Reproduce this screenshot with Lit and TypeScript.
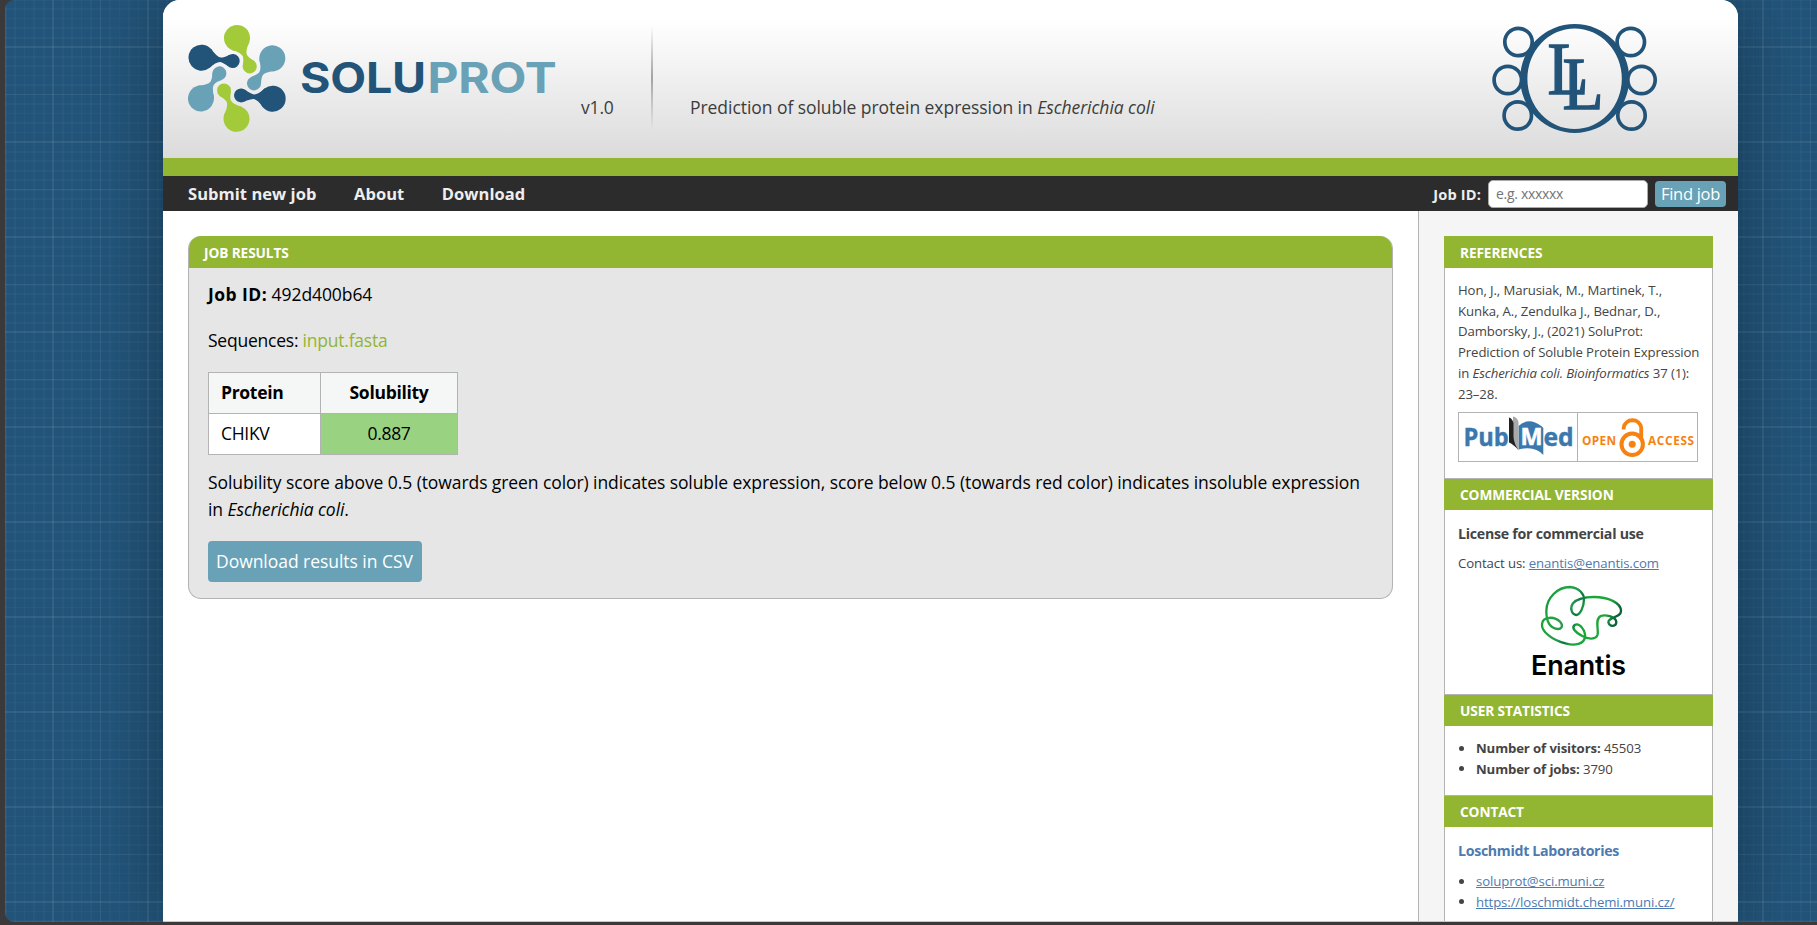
import { LitElement, html, svg, css } from "lit";
import { customElement } from "lit/decorators.js";

const GREEN = "#a2ca39";
const TEAL = "#69a1b6";
const NAVY = "#22547a";

/* colour, large ball x/y, small ball x/y */
const MOLECULES: [string, number, number, number, number][] = [
  [GREEN, 49, 17, 61.7, 45.4],
  [TEAL, 84.3, 37.3, 66, 62.4],
  [NAVY, 84.7, 77.7, 53, 74.4],
  [GREEN, 48.5, 97.8, 36, 69.4],
  [TEAL, 13, 77.4, 31.4, 52.3],
  [NAVY, 13.5, 36.7, 44.7, 40],
];

@customElement("soluprot-logo")
export class SoluprotLogo extends LitElement {
  static styles = css`
    :host { display: block; }
    svg { display: block; }
    .word { font-family: Inter, sans-serif; font-weight: 700; font-size: 42px; }
  `;
  render() {
    return html`<svg width="372" height="112" viewBox="0 0 372 112">
      ${MOLECULES.map(([c, x, y, sx, sy]) => {
        const d = Math.hypot(sx - x, sy - y);
        const a = (Math.atan2(sy - y, sx - x) * 180) / Math.PI;
        return svg`<g fill=${c} transform="translate(${x} ${y}) rotate(${a})">
          <circle r="13"/><circle cx=${d} r="7"/>
          <path d="M8.5 9.8 Q15 2.4 19 2.2 Q22 2.4 ${d - 3.6} 6 L${d - 3.6} -6 Q22 -2.4 19 -2.2 Q15 -2.4 8.5 -9.8Z"/>
        </g>`;
      })}
      <text class="word" x="112" y="72.400" fill=${NAVY} textLength="126" lengthAdjust="spacingAndGlyphs">SOLU</text>
      <text class="word" x="239.500" y="72.400" fill=${TEAL} textLength="129" lengthAdjust="spacingAndGlyphs">PROT</text>
    </svg>`;
  }
}

@customElement("loschmidt-logo")
export class LoschmidtLogo extends LitElement {
  static styles = css`
    :host { display: block; }
    svg { display: block; }
    .l { font-family: "Liberation Serif", serif; font-size: 75px; }
  `;
  render() {
    const rings = [[26.5, 18], [15.8, 56], [25.8, 91.5], [138.8, 18], [149.5, 56], [139.5, 91.5]];
    return html`<svg width="166" height="112" viewBox="0 0 166 112" fill=${NAVY}>
      <path fill-rule="evenodd" d="M28.2 54.5a54.5 54.4 0 1 0 109 0a54.5 54.4 0 1 0 -109 0ZM35.4 54.7a47.2 50.3 0 1 0 94.4 0a47.2 50.3 0 1 0 -94.4 0Z"/>
      ${rings.map(([x, y]) => svg`<circle cx=${x} cy=${y} r="13.7" fill="none" stroke=${NAVY} stroke-width="3.7"/>`)}
      <text class="l" x="55.5" y="69.500" textLength="41" lengthAdjust="spacingAndGlyphs" stroke=${NAVY} stroke-width="1.400">L</text>
      <text class="l" x="70.5" y="85" textLength="41" lengthAdjust="spacingAndGlyphs" stroke=${NAVY} stroke-width="1.400">L</text>
    </svg>`;
  }
}

@customElement("pubmed-logo")
export class PubmedLogo extends LitElement {
  static styles = css`
    :host { display: block; }
    svg { display: block; }
    text { font-family: "Open Sans", sans-serif; font-weight: 700; }
  `;
  render() {
    return html`<svg width="118" height="48" viewBox="0 0 118 48">
      <text x="4.5" y="32.500" font-size="25" fill="#3b78ae" stroke="#3b78ae" stroke-width=".4" textLength="45" lengthAdjust="spacingAndGlyphs">Pub</text>
      <text x="84.500" y="32.500" font-size="25" fill="#3b78ae" stroke="#3b78ae" stroke-width=".4" textLength="30" lengthAdjust="spacingAndGlyphs">ed</text>
      <path d="M59.5 13Q67 6 76 9.500Q82 12 84.300 15V42Q78 35 68 35.300Q63 35.500 59.500 36.500Z" fill="#3b78ae"/>
      <path d="M54 3.500Q58 4 59.500 9V37L54 30Z" fill="#a9a9a9"/>
      <path d="M50 4.500Q53 5 54.500 10V24Q55 31 59.500 37Q54 31 50 29.500Z" fill="#222"/>
      <text x="61.500" y="31.500" font-size="23" fill="#fff" stroke="#fff" stroke-width=".5" textLength="22" lengthAdjust="spacingAndGlyphs">M</text>
    </svg>`;
  }
}

@customElement("open-access-logo")
export class OpenAccessLogo extends LitElement {
  static styles = css`
    :host { display: block; }
    svg { display: block; }
    text { font-family: "Open Sans", sans-serif; font-weight: 700; font-size: 11.8px; fill: #f68212; }
  `;
  render() {
    return html`<svg width="120" height="48" viewBox="0 0 120 48">
      <text x="4" y="31.500" textLength="34" lengthAdjust="spacing">OPEN</text>
      <text x="70" y="31.500" textLength="46" lengthAdjust="spacing">ACCESS</text>
      <g fill="none" stroke="#f68212" stroke-width="3.800">
        <circle cx="54.200" cy="31.300" r="10.700" stroke-width="4"/>
        <path d="M45.700 16.500V14.500A8.900 8.900 0 0 1 63.200 14.500V26"/>
      </g>
      <circle cx="54.200" cy="31.300" r="3.500" fill="#f68212"/>
    </svg>`;
  }
}

@customElement("enantis-logo")
export class EnantisLogo extends LitElement {
  static styles = css`
    :host { display: block; }
    svg { display: block; margin: 0 auto; overflow: visible; }
    text { font-family: Inter, sans-serif; font-weight: 600; font-size: 27px; }
  `;
  render() {
    return html`<svg width="96" height="98" viewBox="0 0 96 98">
      <defs><linearGradient id="g" x1="0" y1="0" x2="1" y2="0.300">
        <stop offset="0" stop-color="#0b7a3e"/><stop offset=".2" stop-color="#1da53c"/><stop offset=".42" stop-color="#2a9c50"/>
        <stop offset=".52" stop-color="#0d7440"/><stop offset=".6" stop-color="#1ba63a"/><stop offset=".88" stop-color="#1ba63a"/><stop offset="1" stop-color="#09643c"/>
      </linearGradient></defs>
      <path transform="scale(.33333) translate(-394 -347)" fill="none" stroke="url(#g)" stroke-width="7"
        d="M664 425C664 447 625 441 626 459C630 475 650 472 650 458C648 440 615 435 603 440C585 450 597 480 594 495C590 512 565 510 548 500C525 488 515 475 525 467C540 458 558 485 556 503C553 525 525 530 500 523C455 512 425 485 427 465C428 440 465 440 482 458C492 470 485 480 473 479C445 475 440 450 440 425C440 385 475 353 510 353C540 355 553 375 553 390C553 415 540 437 530 437C515 435 510 415 520 402C535 385 560 383 583 383C625 383 664 400 664 425Z"/>
      <text x="0" y="89.500" textLength="95" lengthAdjust="spacingAndGlyphs">Enantis</text>
    </svg>`;
  }
}

@customElement("app-root")
export class AppRoot extends LitElement {
  static styles = css`
    :host {
      display: block; box-sizing: border-box; height: 925px; overflow: hidden;
      padding: 0 0 3px 5px; background: #3b3939;
      font-family: "Open Sans", "Noto Sans", sans-serif;
    }
    * { box-sizing: border-box; }
    p, h2, h3, ul { margin: 0; padding: 0; }
    .desk {
      height: 922px; overflow: hidden; border-radius: 9px 0 0 9px; padding-left: 158px;
      background-color: #22547a;
      background-image:
        repeating-linear-gradient(90deg, rgba(255,255,255,.05) 0 1.500px, transparent 1.500px 47.500px),
        repeating-linear-gradient(180deg, rgba(255,255,255,.05) 0 1.500px, transparent 1.500px 47.500px),
        repeating-linear-gradient(90deg, rgba(255,255,255,.025) 0 1.500px, transparent 1.500px 9.500px),
        repeating-linear-gradient(180deg, rgba(255,255,255,.025) 0 1.500px, transparent 1.500px 9.500px);
      background-position: 0 -1px;
    }
    .page {
      width: 1575px; height: 922px; display: flex; flex-direction: column; overflow: hidden;
      border-radius: 17px 17px 0 0; background: #fff; border-bottom: 1px solid #c8c8c8;
      box-shadow: 0 0 70px rgba(0,0,0,.35);
    }
    header {
      flex: none; height: 176px; display: flex; align-items: flex-start;
      border-bottom: 18px solid #92b532;
      background: linear-gradient(#fff 12%, #dbdbdb 100%);
      color: #3c3c3c; font-size: 17.5px; line-height: 27px; letter-spacing: -.16px;
    }
    .logo { margin: 21px 0 0 25px; }
    .version { margin: 94px 0 0 21px; width: 34px; }
    .rule { width: 2px; height: 104px; margin: 26px 0 0 36px; background: linear-gradient(transparent, #a3a3a3 50%, transparent); }
    .tagline { margin: 94px 0 0 37px; white-space: nowrap; letter-spacing: -.05px; }
    .lab { margin: 24px 80px 0 auto; }
    nav {
      flex: none; height: 35px; display: flex; align-items: center; padding: 0 12px 0 25px;
      background: #2c2c2c; color: #eee; font-weight: 700; font-size: 16.5px; letter-spacing: .05px;
    }
    nav .item { margin-right: 37.500px; line-height: 30px; padding-top: 1px; }
    .find { margin-left: auto; display: flex; align-items: center; }
    .find label { font-size: 14.600px; margin-right: 7px; letter-spacing: .15px; }
    .find input {
      width: 160px; height: 28px; padding: 0 7px; margin-right: 7px; border: 1px solid #aaa; border-radius: 5px;
      background: #fff; font: 14px "Open Sans", sans-serif; letter-spacing: -.3px;
    }
    .find input::placeholder { color: #757575; opacity: 1; }
    .find button {
      width: 71px; height: 26px; padding: 0; border: 0; border-radius: 4px; background: #69a1b6; color: #fff;
      font: 16.500px "Open Sans", sans-serif; letter-spacing: -.3px;
    }
    .columns { flex: 1; min-height: 0; display: flex; }
    main { width: 1255px; padding: 25px 25px 0; }
    .title {
      background: #92b532; color: #fff; font-size: 13.700px; font-weight: 700; line-height: 34px;
      letter-spacing: -.12px; text-transform: uppercase;
    }
    .job { border-radius: 13px; height: 363px; overflow: hidden; display: flex; flex-direction: column; background: #e6e6e6; border: 1px solid #b3b3b3; border-top: 0; }
    .job .title { margin: 0 -1px; height: 32px; padding-left: 16px; flex: none; }
    .body { padding: 13px 19px 0; font-size: 17.500px; line-height: 27px; letter-spacing: -.08px; color: #000; }
    .body .id { margin-bottom: 18.500px; }
    .id b { letter-spacing: .45px; }
    .num { letter-spacing: -.08px; }
    .body .seq { margin-bottom: 18px; letter-spacing: -.23px; }
    .file { color: #92b532; }
    table { border-collapse: collapse; margin-bottom: 14px; }
    th, td { border: 1px solid #b3b3b3; height: 41px; padding: 0 12px; }
    .name { width: 112px; text-align: left; letter-spacing: -.3px; background: #fff; }
    .score { width: 137px; text-align: center; letter-spacing: -.3px; background: #99d382; }
    th.name, th.score { background: #f5f7f7; }
    .csv { display: inline-block; margin-top: 18px; padding: 7px 8px; line-height: 27px; border-radius: 4px; background: #69a1b6; color: #fff; letter-spacing: -.04px; width: 214px; white-space: nowrap; }
    aside { width: 320px; background: #f5f5f5; border-left: 1px solid #b3b3b3; padding: 25px; overflow: hidden; }
    .box .title { height: 31px; line-height: 32px; padding-left: 16px; }
    .box:first-child .title { height: 32px; line-height: 34px; }
    .inner {
      border: 1px solid #b3b3b3; border-top: 0; background: #fff; color: #444; padding: 12px 13px 0;
      font-size: 13.200px; line-height: 20.700px; letter-spacing: -.11px; white-space: nowrap;
    }
    .refs { height: 211px; } .commercial { height: 185px; } .stats { height: 70px; } .contact { height: 160px; }
    .logos { display: flex; width: 240px; height: 50px; margin-top: 8px; border: 1px solid #b3b3b3; }
    .logos open-access-logo { border-left: 1px solid #b3b3b3; }
    h3 { font-size: 14.200px; line-height: 24px; letter-spacing: -.27px; }
    .contact h3 { letter-spacing: -.32px; color: #4d7ab0; }
    .commercial p { margin: 7px 0 11.500px; }
    .link { color: #4d7ab0; text-decoration: underline; }
    ul { list-style: none; }
    li { display: flex; align-items: center; gap: 12px; padding-left: 1px; line-height: 20.500px; }
    li::before { content: ""; width: 5px; height: 5px; border-radius: 50%; background: #444; }
    .contact ul { margin-top: 8px; }
    li b { letter-spacing: -.12px; }
  `;

  render() {
    return html`<div class="desk"><div class="page">
      <header>
        <soluprot-logo class="logo"></soluprot-logo>
        <div class="version">v1.0</div>
        <div class="rule"></div>
        <div class="tagline">Prediction of soluble protein expression in <i>Escherichia coli</i></div>
        <loschmidt-logo class="lab"></loschmidt-logo>
      </header>
      <nav>
        <span class="item">Submit new job</span><span class="item">About</span><span class="item">Download</span>
        <div class="find"><label>Job ID:</label><input placeholder="e.g. xxxxxx"><button>Find job</button></div>
      </nav>
      <div class="columns">
        <main>
          <section class="job">
            <h2 class="title">Job results</h2>
            <div class="body">
              <p class="id"><b>Job ID:</b> <span class="num">492d400b64</span></p>
              <p class="seq">Sequences: <span class="file">input.fasta</span></p>
              <table>
                <tr><th class="name">Protein</th><th class="score">Solubility</th></tr>
                <tr><td class="name">CHIKV</td><td class="score">0.887</td></tr>
              </table>
              <p>Solubility score above 0.5 (towards green color) indicates soluble expression, score below 0.5 (towards red color) indicates insoluble expression in <i>Escherichia coli</i>.</p>
              <span class="csv">Download results in CSV</span>
            </div>
          </section>
        </main>
        <aside>
          <section class="box"><h2 class="title">References</h2>
            <div class="inner refs">
              <p>Hon, J., Marusiak, M., Martinek, T.,<br>Kunka, A., Zendulka J., Bednar, D.,<br>Damborsky, J., (2021) SoluProt:<br>Prediction of Soluble Protein Expression<br>in <i>Escherichia coli. Bioinformatics</i> 37 (1):<br>23–28.</p>
              <div class="logos"><pubmed-logo></pubmed-logo><open-access-logo></open-access-logo></div>
            </div>
          </section>
          <section class="box"><h2 class="title">Commercial version</h2>
            <div class="inner commercial">
              <h3>License for commercial use</h3>
              <p>Contact us: <span class="link">enantis@enantis.com</span></p>
              <enantis-logo></enantis-logo>
            </div>
          </section>
          <section class="box"><h2 class="title">User statistics</h2>
            <div class="inner stats"><ul>
              <li><span><b>Number of visitors:</b> 45503</span></li>
              <li><span><b>Number of jobs:</b> 3790</span></li>
            </ul></div>
          </section>
          <section class="box"><h2 class="title">Contact</h2>
            <div class="inner contact">
              <h3>Loschmidt Laboratories</h3>
              <ul><li><span class="link">soluprot@sci.muni.cz</span></li><li><span class="link">https://loschmidt.chemi.muni.cz/</span></li></ul>
            </div>
          </section>
        </aside>
      </div>
    </div></div>`;
  }
}
